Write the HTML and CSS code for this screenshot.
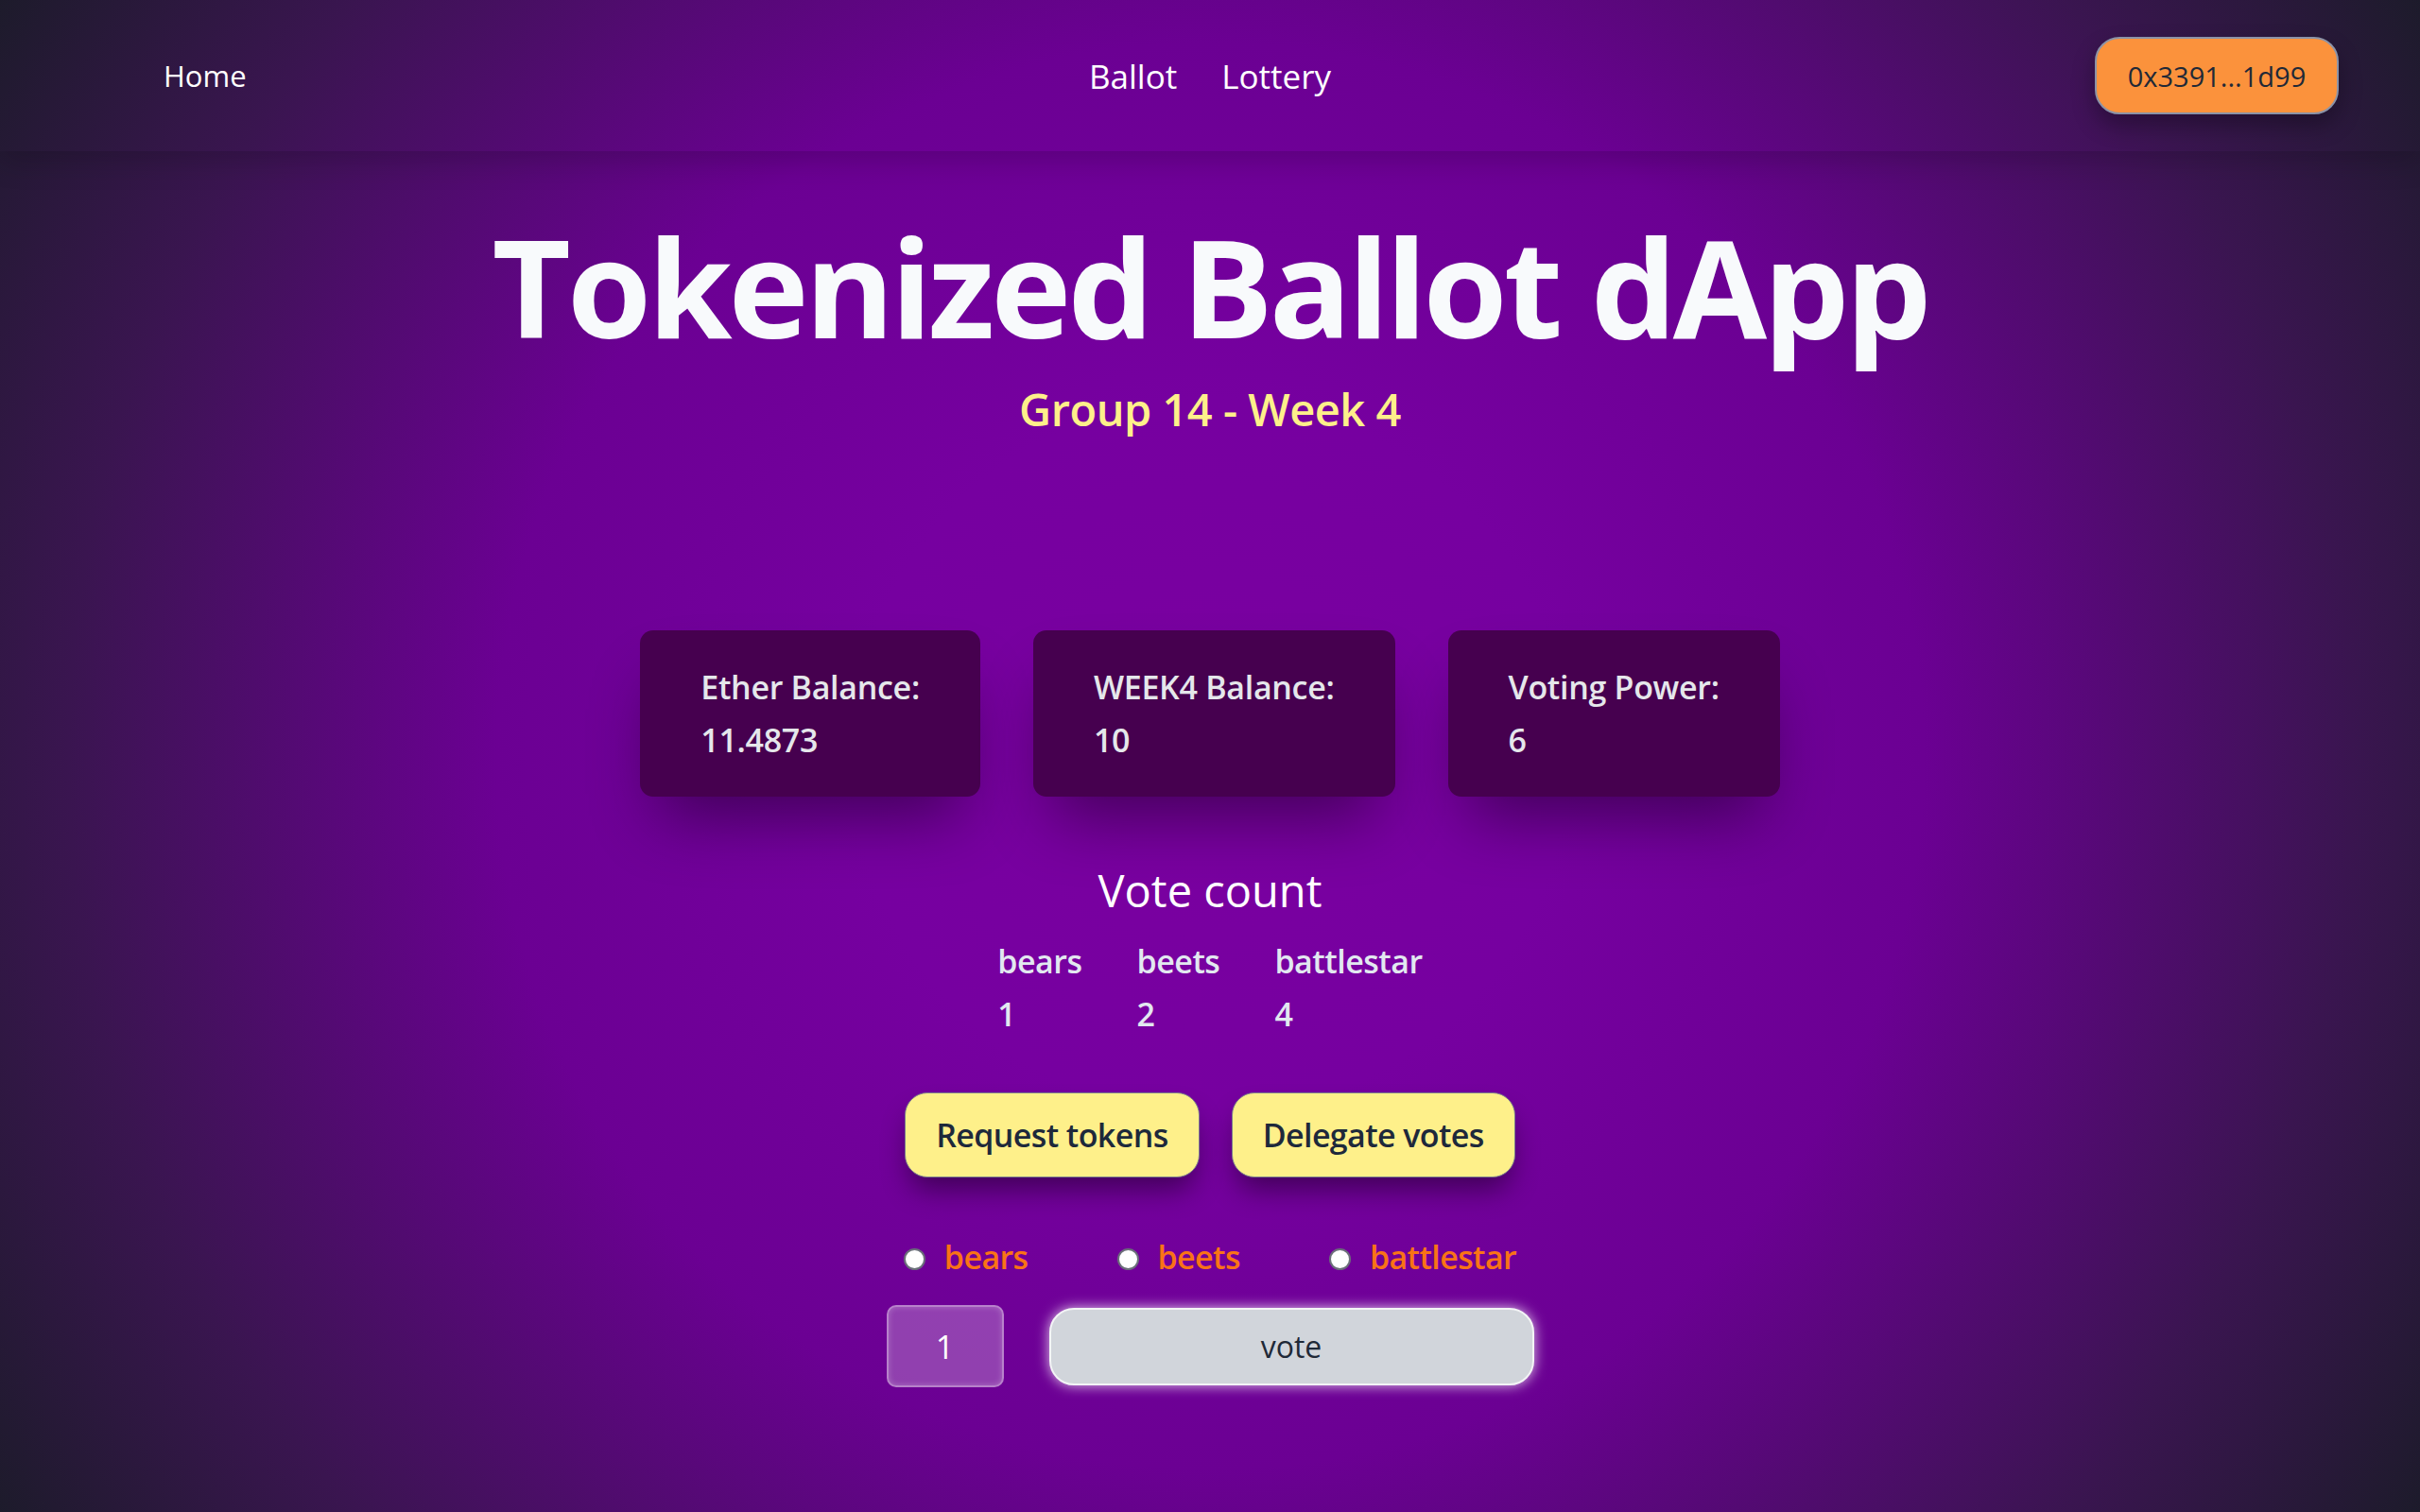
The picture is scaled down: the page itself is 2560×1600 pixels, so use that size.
FILE: index.html
```html
<!DOCTYPE html>
<html lang="en">
<head>
<meta charset="utf-8">
<title>Tokenized Ballot dApp</title>
<link rel="stylesheet" href="styles.css">
</head>
<body>
<nav class="nav">
  <div class="nav-left"><a class="nav-home" href="#">Home</a></div>
  <div class="nav-center">
    <a class="nav-link" href="#">Ballot</a>
    <a class="nav-link" href="#">Lottery</a>
  </div>
  <div class="nav-right"><button class="address-btn">0x3391...1d99</button></div>
</nav>
<main class="main">
  <h1 class="title">Tokenized Ballot dApp</h1>
  <p class="subtitle">Group 14 - Week 4</p>

  <section class="cards">
    <div class="card"><div>Ether Balance:</div><div>11.4873</div></div>
    <div class="card"><div>WEEK4 Balance:</div><div>10</div></div>
    <div class="card"><div>Voting Power:</div><div>6</div></div>
  </section>

  <h2 class="vote-title">Vote count</h2>
  <div class="vote-table">
    <div>bears</div><div>beets</div><div>battlestar</div>
    <div>1</div><div>2</div><div>4</div>
  </div>

  <div class="actions">
    <button class="yellow-btn">Request tokens</button>
    <button class="yellow-btn">Delegate votes</button>
  </div>

  <div class="radios">
    <label class="radio-item"><input type="radio" name="prop"><span>bears</span></label>
    <label class="radio-item"><input type="radio" name="prop"><span>beets</span></label>
    <label class="radio-item"><input type="radio" name="prop"><span>battlestar</span></label>
  </div>

  <div class="vote-row">
    <input class="amount" type="text" value="1">
    <button class="vote-btn">vote</button>
  </div>
</main>
</body>
</html>
```
FILE: styles.css
```css
html, body {
  margin: 0;
  padding: 0;
}
body {
  min-height: 1600px;
  font-family: "Open Sans", "Noto Sans", sans-serif;
  background: radial-gradient(circle at 50% 50%, #7a00a0 0%, #7600a0 25%, #6b0093 50%, #3a1550 80%, #1d1b2b 100%);
  color: #f8fafc;
}
.nav {
  height: 160px;
  display: grid;
  grid-template-columns: 1fr auto 1fr;
  align-items: center;
  padding: 0 86px;
  box-sizing: border-box;
  box-shadow: 0 10px 30px rgba(0, 0, 0, 0.18);
}
.nav-left { padding-left: 87px; }
.nav-home {
  color: #fff;
  text-decoration: none;
  font-size: 31px;
}
.nav-center {
  display: flex;
  gap: 47px;
}
.nav-link {
  color: #fff;
  text-decoration: none;
  font-size: 35px;
}
.nav-right {
  display: flex;
  justify-content: flex-end;
}
.address-btn {
  width: 258px;
  height: 82px;
  background: #fb923c;
  color: #1f2937;
  border: 2px solid #8b93a7;
  border-radius: 26px;
  font-family: inherit;
  font-size: 29px;
  box-shadow: 0 12px 24px rgba(0, 0, 0, 0.3);
}
.main {
  display: flex;
  flex-direction: column;
  align-items: center;
}
.title {
  margin: 70px 0 0;
  font-size: 144px;
  line-height: 1;
  font-weight: 700;
  color: #f8fafc;
  letter-spacing: -4px;
}
.subtitle {
  margin: 36px 0 0;
  font-size: 47px;
  line-height: 1;
  font-weight: 600;
  color: #fef08a;
  letter-spacing: -0.5px;
}
.cards {
  margin-top: 210px;
  display: flex;
  gap: 56px;
}
.card {
  background: #46004f;
  border-radius: 14px;
  padding: 32px 64px;
  font-size: 34px;
  line-height: 56px;
  font-weight: 600;
  color: #e5e7eb;
  letter-spacing: -0.3px;
  box-shadow: 0 40px 70px -20px rgba(0, 0, 0, 0.45);
}
.vote-title {
  margin: 76px 0 0;
  font-size: 47px;
  line-height: 1;
  font-weight: 400;
  color: #fff;
}
.vote-table {
  margin-top: 23px;
  display: grid;
  grid-template-columns: repeat(3, auto);
  column-gap: 58px;
  font-size: 34px;
  line-height: 56px;
  font-weight: 600;
  color: #e2e8f0;
  letter-spacing: -0.5px;
}
.actions {
  margin-top: 55px;
  display: flex;
  gap: 34px;
}
.yellow-btn {
  background: #fef08a;
  color: #1e293b;
  border: 1px solid #7c7f8c;
  border-radius: 24px;
  padding: 16px 32px;
  font-family: inherit;
  font-size: 34px;
  line-height: 56px;
  font-weight: 600;
  letter-spacing: -0.6px;
  box-shadow: 0 18px 30px -6px rgba(0, 0, 0, 0.45);
}
.radios {
  margin-top: 56px;
  display: flex;
  gap: 94px;
}
.radio-item {
  display: flex;
  align-items: center;
  gap: 20px;
  font-size: 34px;
  line-height: 56px;
  font-weight: 600;
  color: #f97316;
  letter-spacing: -0.6px;
}
.radio-item input {
  appearance: none;
  -webkit-appearance: none;
  margin: 4px 0 0;
  width: 23px;
  height: 23px;
  box-sizing: border-box;
  border-radius: 50%;
  background: #fff;
  border: 2px solid #6b6f7a;
}
.vote-row {
  margin-top: 23px;
  display: flex;
  align-items: center;
  gap: 48px;
}
.amount {
  width: 124px;
  height: 87px;
  box-sizing: border-box;
  background: rgba(255, 255, 255, 0.25);
  border: 2px solid rgba(255, 255, 255, 0.35);
  border-radius: 10px;
  color: #fff;
  text-align: center;
  font-family: inherit;
  font-size: 34px;
  box-shadow: inset 0 0 6px rgba(255, 255, 255, 0.25);
}
.vote-btn {
  width: 513px;
  height: 82px;
  background: #d1d5db;
  color: #1f2937;
  border: 2px solid #f3f4f6;
  border-radius: 26px;
  font-family: inherit;
  font-size: 32px;
  box-shadow: 0 0 14px rgba(255, 255, 255, 0.8);
}
```
